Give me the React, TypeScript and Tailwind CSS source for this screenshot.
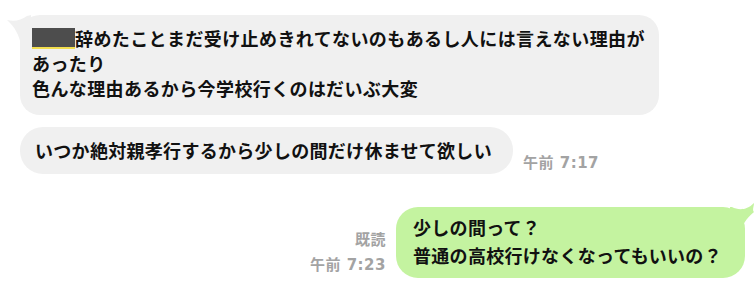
const jp = { fontFamily: '"Noto Sans CJK JP", "Noto Sans", sans-serif' };
const meta = { fontFamily: '"DejaVu Sans", "Noto Sans CJK JP", sans-serif' };

const LeftTail = () => (
  <svg
    className="absolute left-[-13px] top-0"
    width="24"
    height="30"
    viewBox="0 0 24 30"
  >
    <path d="M24 0 L24 30 L14 30 C12 20 8 12 0 5 C8 7 14 5 20 1 Z" fill="#f0f0f0" />
  </svg>
);

const RightTail = () => (
  <svg
    className="absolute right-[-9px] top-[-4px]"
    width="24"
    height="30"
    viewBox="0 0 24 30"
  >
    <path d="M0 4 L0 30 L10 30 C12 22 16 16 24 9 C22 7 24 3 24 0 C16 8 8 7 2 4 Z" fill="#c4f3a0" />
  </svg>
);

export default function App() {
  return (
    <div className="w-[755px] h-[294px] bg-white overflow-hidden text-[#111]" style={jp}>
      <div className="pt-[15px] pl-[20px]">
        <div className="relative w-[639px] rounded-[20px] bg-[#f0f0f0] pl-[12px] pt-[11px] pb-[14px] text-[18px] font-bold leading-[25px] tracking-[0.4px]">
          <LeftTail />
          <span className="relative">
            <span className="inline-block w-[43px] h-[21px] align-[-3px] bg-[#4d4d4d] border-b-[2px] border-[#f2de4e]" />
            辞めたことまだ受け止めきれてないのもあるし人には言えない理由が
            <br />
            あったり
            <br />
            色んな理由あるから今学校行くのはだいぶ大変
          </span>
        </div>

        <div className="mt-[12px] flex items-end gap-[10px]">
          <div className="w-[493px] rounded-[23px] bg-[#f0f0f0] pl-[15px] py-[11px] text-[18px] font-bold leading-[25px] tracking-[0.3px] whitespace-nowrap">
            いつか絶対親孝行するから少しの間だけ休ませて欲しい
          </div>
          <div
            className="pb-[1px] text-[15px] font-bold leading-[20px] tracking-[0.5px] text-[#a3a3a3]"
            style={meta}
          >
            午前 7:17
          </div>
        </div>
      </div>

      <div className="mt-[33px] pr-[10px] flex justify-end items-end gap-[10px]">
        <div
          className="flex flex-col items-end pb-[0px] text-[15px] font-bold leading-[25px] tracking-[0.5px] text-[#a3a3a3]"
          style={meta}
        >
          <span>既読</span>
          <span>午前 7:23</span>
        </div>
        <div className="relative w-[349px] rounded-[22px] bg-[#c4f3a0] pl-[17px] pt-[6px] pb-[9px] text-[18px] font-bold leading-[28px] tracking-[0.3px]">
          <RightTail />
          <span className="relative">
            少しの間って？
            <br />
            普通の高校行けなくなってもいいの？
          </span>
        </div>
      </div>
    </div>
  );
}
